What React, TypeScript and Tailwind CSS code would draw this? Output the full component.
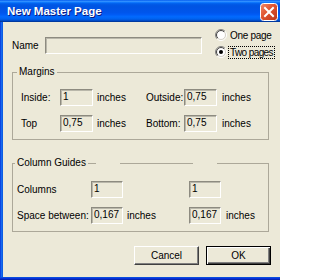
import React from 'react';

const face = 'bg-[#ECE9D8]';

function Field({ value, className }: { value?: string; className: string }) {
  return (
    <div
      className={`shrink-0 h-[17px] border border-t-[#8d8b80] border-l-[#8d8b80] border-r-white border-b-white shadow-[inset_1px_1px_0_#b9b7aa] ${face} pl-[2px] text-[10px] leading-[14px] text-black whitespace-nowrap ${className}`}
    >
      {value}
    </div>
  );
}

function Radio({ checked }: { checked?: boolean }) {
  return (
    <svg width="12" height="12" viewBox="0 0 12 12" className="shrink-0">
      <defs>
        <linearGradient id="ro" x1="0" y1="0" x2="1" y2="1">
          <stop offset="0.5" stopColor="#808080" />
          <stop offset="0.5" stopColor="#ffffff" />
        </linearGradient>
        <linearGradient id="ri" x1="0" y1="0" x2="1" y2="1">
          <stop offset="0.5" stopColor="#404040" />
          <stop offset="0.5" stopColor="#d4d0c8" />
        </linearGradient>
      </defs>
      <circle cx="6" cy="6" r="5.5" fill="none" stroke="url(#ro)" strokeWidth="1" />
      <circle cx="6" cy="6" r="4.5" fill="#ffffff" stroke="url(#ri)" strokeWidth="1" />
      {checked && <circle cx="6" cy="6" r="2" fill="#000000" />}
    </svg>
  );
}

function GroupBox({
  title,
  titleClass,
  className,
  children,
}: {
  title: string;
  titleClass: string;
  className: string;
  children: React.ReactNode;
}) {
  return (
    <div className={`relative border border-[#aca899] ${className}`}>
      <span className={`absolute top-[-7px] px-[2px] ${face} text-[10px] leading-[12px] whitespace-nowrap ${titleClass}`}>
        {title}
      </span>
      {children}
    </div>
  );
}

function Button({ label, primary }: { label: string; primary?: boolean }) {
  return (
    <button
      className={
        primary
          ? `w-[65px] h-[19px] border border-black ${face} shadow-[inset_1px_1px_0_#ffffff,inset_-1px_-1px_0_#404040,inset_-2px_-2px_0_#808080] text-[10px] leading-[15px] text-black`
          : `w-[65px] h-[19px] border border-t-white border-l-white border-r-[#404040] border-b-[#404040] ${face} shadow-[inset_-1px_-1px_0_#808080] text-[10px] leading-[15px] text-black`
      }
    >
      {label}
    </button>
  );
}

export default function App() {
  return (
    <div className="w-[280px] h-[280px] overflow-hidden font-['Liberation_Sans',Arial,sans-serif] text-black select-none">
      {/* Title bar */}
      <div className="h-[22px] flex items-start bg-[linear-gradient(to_bottom,#0058ee_0%,#3593ff_6%,#127dff_10%,#0262ee_16%,#0057e5_22%,#0054e3_30%,#0055eb_56%,#005bf5_66%,#026afe_76%,#0062ef_86%,#0052d6_92%,#0040ab_96%,#003092_100%)]">
        <span className="ml-[7px] mt-[4px] text-[11.5px] leading-[14px] font-bold text-white whitespace-nowrap [text-shadow:1px_1px_0_#0a1a80]">
          New Master Page
        </span>
        <svg width="18" height="18" viewBox="0 0 18 18" className="ml-auto mr-[2px] mt-[3px] shrink-0">
          <defs>
            <linearGradient id="cb" x1="0" y1="0" x2="1" y2="1">
              <stop offset="0" stopColor="#f08a6a" />
              <stop offset="0.45" stopColor="#e0532f" />
              <stop offset="1" stopColor="#b8361a" />
            </linearGradient>
          </defs>
          <rect x="0.5" y="0.5" width="17" height="17" rx="3" fill="url(#cb)" stroke="#ffffff" />
          <path d="M5 5 L13 13 M13 5 L5 13" stroke="#ffffff" strokeWidth="2" strokeLinecap="square" />
        </svg>
      </div>

      <div className="flex h-[255px]">
        <div className="w-[3px] shrink-0 bg-[linear-gradient(to_right,#0831d9,#166aee,#0855dd)]" />
        <div className={`flex-1 min-w-0 ${face} pl-[9px] pr-[11px]`}>
          {/* Name + page type */}
          <div className="flex h-[50px]">
            <div className="flex shrink-0 items-center mt-[15px] h-[17px]">
              <span className="w-[33px] text-[10px] leading-[12px]">Name</span>
              <Field className="w-[157px] border-r-[#ECE9D8] border-b-[#ECE9D8]" />
            </div>
            <div className="ml-[13px] mt-[5px] shrink-0 flex flex-col gap-[1px]">
              <div className="flex items-center h-[16px]">
                <Radio />
                <span className="ml-[1px] px-[1px] border border-transparent text-[10px] leading-[11px] tracking-[-0.3px] whitespace-nowrap">
                  One page
                </span>
              </div>
              <div className="flex items-center h-[16px]">
                <Radio checked />
                <span className="ml-[1px] px-[1px] border border-dotted border-black text-[10px] leading-[11px] tracking-[-0.6px] whitespace-nowrap">
                  Two pages
                </span>
              </div>
            </div>
          </div>

          {/* Margins */}
          <GroupBox title="Margins" titleClass="left-[4px]" className="h-[68px] pt-[16px] pl-[8px]">
            <div className="flex flex-col gap-[9px] text-[10px] leading-[12px] whitespace-nowrap">
              <div className="flex items-center h-[17px]">
                <span className="w-[39px] shrink-0">Inside:</span>
                <Field value="1" className="w-[33px]" />
                <span className="ml-[4px] w-[49px] shrink-0">inches</span>
                <span className="w-[38px] shrink-0">Outside:</span>
                <Field value="0,75" className="w-[33px]" />
                <span className="ml-[5px]">inches</span>
              </div>
              <div className="flex items-center h-[17px]">
                <span className="w-[39px] shrink-0">Top</span>
                <Field value="0,75" className="w-[33px]" />
                <span className="ml-[4px] w-[49px] shrink-0">inches</span>
                <span className="w-[38px] shrink-0">Bottom:</span>
                <Field value="0,75" className="w-[33px]" />
                <span className="ml-[5px]">inches</span>
              </div>
            </div>
          </GroupBox>

          {/* Column guides */}
          <GroupBox
            title="Column Guides"
            titleClass="left-[2px]"
            className="mt-[23px] h-[69px] pt-[17px] pl-[4px]"
          >
            <span className={`absolute top-[-1px] left-[83px] w-[24px] h-[1px] ${face}`} />
            <span className={`absolute top-[-1px] left-[180px] w-[24px] h-[1px] ${face}`} />
            <div className="flex flex-col gap-[9px] text-[10px] leading-[12px] whitespace-nowrap">
              <div className="flex items-center h-[17px]">
                <span className="w-[74px] shrink-0">Columns</span>
                <Field value="1" className="w-[32px]" />
                <span className="w-[66px] shrink-0" />
                <Field value="1" className="w-[32px]" />
              </div>
              <div className="flex items-center h-[17px]">
                <span className="w-[74px] shrink-0">Space between:</span>
                <Field value="0,167" className="w-[32px]" />
                <span className="ml-[4px] w-[62px] shrink-0">inches</span>
                <Field value="0,167" className="w-[32px]" />
                <span className="ml-[5px]">inches</span>
              </div>
            </div>
          </GroupBox>

          {/* Buttons */}
          <div className="mt-[14px] mr-[-2px] flex justify-end gap-[7px]">
            <Button label="Cancel" />
            <Button label="OK" primary />
          </div>
        </div>
      </div>

      <div className="h-[3px] bg-[linear-gradient(to_bottom,#0a5be0,#0831d9,#001ea0)]" />
    </div>
  );
}
